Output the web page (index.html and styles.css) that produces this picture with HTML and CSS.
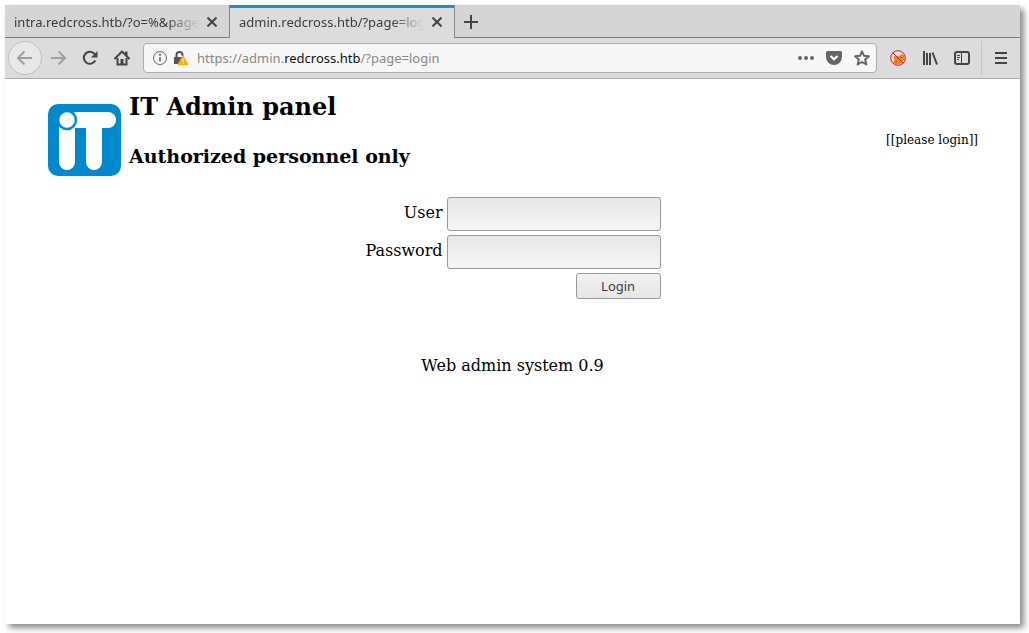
FILE: index.html
```html
<!DOCTYPE html>
<html lang="en">
<head>
<meta charset="utf-8">
<title>IT Admin panel</title>
<link rel="stylesheet" href="styles.css">
</head>
<body>
<div class="window">
  <div class="tabs" role="tablist">
    <div class="tab">
      <span class="tab-title" role="tab">intra.redcross.htb/?o=%&amp;page</span>
      <button class="close" aria-label="Close tab"><svg width="10" height="10" viewBox="0 0 10 10"><path d="M.5.5l9 9M9.500.5l-9 9"/></svg></button>
    </div>
    <div class="tab active">
      <span class="tab-title" role="tab" aria-selected="true">admin.redcross.htb/?page=log</span>
      <button class="close" aria-label="Close tab"><svg width="10" height="10" viewBox="0 0 10 10"><path d="M.5.5l9 9M9.500.5l-9 9"/></svg></button>
    </div>
    <button class="new-tab" aria-label="New tab"><svg width="14" height="14" viewBox="0 0 14 14"><path d="M7 0v14M0 7h14"/></svg></button>
  </div>
  <nav class="toolbar">
    <button class="tool back" aria-label="Back"><svg width="16" height="16" viewBox="0 0 16 16"><path d="M15 8H1.500M7.500 1.500L1 8l6.500 6.500"/></svg></button>
    <button class="tool forward" aria-label="Forward"><svg width="16" height="16" viewBox="0 0 16 16"><path d="M1 8h13.500M8.500 1.500L15 8l-6.500 6.500"/></svg></button>
    <button class="tool" aria-label="Reload"><svg width="16" height="16" viewBox="0 0 16 16"><path d="M13.200 10.500A6 6 0 1 1 12.500 4"/><path class="fill" d="M15.500 1v6.500H9z"/></svg></button>
    <button class="tool" aria-label="Home"><svg width="16" height="16" viewBox="0 0 16 16"><path d="M1 8.500L8 1.500l7 7" stroke-linecap="round" stroke-linejoin="round"/><path d="M3.500 8v6.500h9V8"/><path class="fill" d="M6.500 9h3v6h-3zM11 1.500h2.500V6L11 4z"/></svg></button>
    <div class="address">
      <svg class="info" width="16" height="16" viewBox="0 0 16 16"><circle cx="8" cy="8" r="6.500"/><path d="M8 7v4.500M8 4v2" stroke-width="1.600"/></svg>
      <svg class="lock" width="16" height="16" viewBox="0 0 16 16"><path class="shackle" d="M3.500 8V5a3 3 0 0 1 6 0v1"/><path class="lock-body" d="M1 7h9.500v7H1z"/><path class="warn" d="M10 5.500L15 14.500H5z"/><path class="bang" d="M10 8.500v3M10 12.500v1.300"/></svg>
      <span class="url">https://admin.<b>redcross.htb</b>/?page=login</span>
      <button class="page-action" aria-label="Page actions"><svg width="18" height="16" viewBox="0 0 18 16"><circle cx="4" cy="8" r="2"/><circle cx="10" cy="8" r="2"/><circle cx="16" cy="8" r="2"/></svg></button>
      <button class="page-action" aria-label="Save to Pocket"><svg width="16" height="16" viewBox="0 0 16 16"><path d="M1.500 1h13A1.500 1.500 0 0 1 16 2.500V7A8 8 0 0 1 0 7V2.500A1.500 1.500 0 0 1 1.500 1z"/><path class="chevron" d="M4.500 6L8 9.300 11.500 6"/></svg></button>
      <button class="page-action star" aria-label="Bookmark"><svg width="16" height="16" viewBox="0 0 16 16"><path d="M8 1.300l2 4.500 4.900.5-3.700 3.300 1.100 4.900L8 12l-4.300 2.500 1.100-4.900L1.100 6.300 6 5.800z"/></svg></button>
    </div>
    <button class="tool addon" aria-label="Proxy off"><svg width="16" height="16" viewBox="0 0 16 16"><circle cx="8" cy="8" r="7.300" fill="#e9dedb" stroke="none"/><path d="M3 13l1.500-2.500L3.500 6.500l4-1 1 1L11 4.500l3 .5v2l.8 2.500-2.800 2.300-1.500 2.200-4 .5z" fill="#ee8512" stroke="none"/><path d="M5 11.500l2 .5M10.500 7.500h1.500" stroke="#9b5c19" stroke-width="1"/><circle cx="8" cy="8" r="7.300"/><path d="M2.800 2.800l10.400 10.400"/></svg></button>
    <button class="tool" aria-label="Library"><svg width="16" height="16" viewBox="0 0 16 16"><path d="M2 1v14M5 3v12M8 3v12M10.500 2.500l4.500 12"/></svg></button>
    <button class="tool" aria-label="Sidebars"><svg width="16" height="16" viewBox="0 0 16 16"><rect x="1" y="2" width="14" height="12" rx="2"/><path d="M7.500 2v12M3 5.500h3M3 7.500h3M3 9.500h2" stroke-width="1"/></svg></button>
    <span class="divider"></span>
    <button class="tool" aria-label="Open menu"><svg width="16" height="16" viewBox="0 0 16 16"><path d="M2 3h12M2 8h12M2 13h12"/></svg></button>
  </nav>
  <main class="page">
    <header class="masthead">
      <svg class="logo" width="73" height="72" viewBox="0 0 73 72" role="img" aria-label="IT"><rect width="73" height="72" rx="10" fill="#0089cf"/><g fill="#fff"><rect x="19" y="8" width="49" height="16" rx="8"/><path d="M38 18h16v40a8 8 0 0 1-16 0zM11 18h16v40a8 8 0 0 1-16 0z"/></g><circle cx="19" cy="16" r="9" fill="#fff" stroke="#0089cf" stroke-width="2.500"/></svg>
      <div class="titles">
        <h1>IT Admin panel</h1>
        <h2>Authorized personnel only</h2>
      </div>
      <span class="status">[[please login]]</span>
    </header>
    <form class="login">
      <label for="user">User</label>
      <input id="user" type="text">
      <label for="password">Password</label>
      <input id="password" type="password">
      <button class="submit" type="button">Login</button>
    </form>
    <footer class="footer">Web admin system 0.9</footer>
  </main>
</div>
</body>
</html>
```
FILE: styles.css
```css
* { box-sizing: border-box; }
body {
  margin: 0;
  padding: 5px 9px 9px 5px;
  min-height: 100vh;
  display: flex;
  background: #fff;
  font-family: "Noto Sans", sans-serif;
  font-size: 13px;
}
button {
  border: 0;
  padding: 0;
  background: none;
  font: inherit;
}
svg { display: block; fill: none; }
.window {
  flex: 1;
  min-width: 0;
  display: flex;
  flex-direction: column;
  background: #fff;
  box-shadow: 4px 4px 6px rgba(0, 0, 0, .45);
}
.tabs {
  display: flex;
  height: 33px;
  background: #d5d5d5;
  box-shadow: inset 0 -1px #7e7e7e;
  color: #3c3c3c;
}
.tab {
  display: flex;
  align-items: center;
  gap: 4px;
  width: 224px;
  padding: 0 12px 0 9px;
}
.tab.active {
  width: 226px;
  border: solid #858585;
  border-width: 0 1px;
  background: #dcdcdc;
  box-shadow: inset 0 3px #208fd2;
}
.tab-title {
  flex: 1;
  min-width: 0;
  overflow: hidden;
  white-space: nowrap;
  line-height: 20px;
  mask-image: linear-gradient(to left, transparent 4px, #000 36px);
}
.close svg, .new-tab svg { stroke: #444; stroke-width: 2; }
.new-tab { padding: 0 9px; }
.toolbar {
  display: flex;
  align-items: center;
  height: 41px;
  padding: 0 3px;
  background: #dcdcdc;
  border-bottom: 1px solid #ababab;
}
.tool {
  display: grid;
  place-items: center;
  width: 32px;
  height: 32px;
  flex: none;
}
.tool svg { stroke: #444; stroke-width: 2; }
.tool .fill { fill: #444; stroke: none; }
.back {
  width: 34px;
  height: 34px;
  border: 1px solid #c0c0c0;
  border-radius: 50%;
  background: #e8e8e8;
}
.back svg, .forward svg { stroke: #a0a0a0; }
.address {
  flex: 1;
  min-width: 0;
  display: flex;
  align-items: center;
  height: 30px;
  margin: 0 5px;
  padding: 0 6px 0 8px;
  border: 1px solid #adadad;
  border-radius: 4px;
  background: #f7f7f7;
  color: #888;
}
.info { stroke: #666; stroke-width: 1; }
.lock { margin: 0 8px 0 5px; overflow: visible; }
.shackle { stroke: #555; stroke-width: 2; }
.lock-body { fill: #555; }
.warn { fill: #fdb00d; stroke: #fdb00d; stroke-width: 1; stroke-linejoin: round; }
.bang { stroke: #fff; stroke-width: 1; }
.url { flex: 1; min-width: 0; overflow: hidden; white-space: nowrap; }
.url b { font-weight: 400; color: #111; }
.page-action { margin-left: 12px; }
.page-action svg { fill: #666; }
.page-action .chevron { fill: none; stroke: #fff; stroke-width: 2; }
.star svg { fill: none; stroke: #666; stroke-width: 2; stroke-linejoin: round; }
.addon svg { stroke: #cc1d1d; stroke-width: 1; }
.divider { width: 1px; height: 34px; margin: 0 3px; background: #c4c4c4; }
.page {
  flex: 1;
  font-family: "DejaVu Serif", serif;
  font-size: 16px;
  line-height: 19px;
  color: #000;
}
.masthead {
  display: flex;
  align-items: center;
  gap: 8px;
  padding: 14px 42px 0 43px;
}
.logo { margin-top: 9px; }
.titles { flex: 1; }
h1 { margin: 0 0 23px; font-size: 24px; line-height: 28px; }
h2 { margin: 0; padding-bottom: 10px; font-size: 19px; line-height: 24px; }
.status { font-size: 12px; margin-top: 10px; }
.login {
  display: grid;
  grid-template-columns: auto 214px;
  justify-content: center;
  align-items: center;
  gap: 4px;
  padding: 19px 0 0 1px;
}
.login label { text-align: right; line-height: 20px; padding-bottom: 2px; }
.login input {
  width: 100%;
  height: 34px;
  padding: 0 8px;
  border: 1px solid #999;
  border-radius: 3px;
  background: linear-gradient(#e6e6e6, #f6f6f6);
  font: inherit;
}
.submit {
  grid-column: 2;
  justify-self: end;
  width: 85px;
  height: 26px;
  border: 1px solid #999;
  border-radius: 3px;
  background: linear-gradient(#f2f2f2, #e6e6e6);
  color: #3c3c3c;
  font-family: "Noto Sans", sans-serif;
  font-size: 13px;
}
.footer { padding-top: 57px; text-align: center; }
```
